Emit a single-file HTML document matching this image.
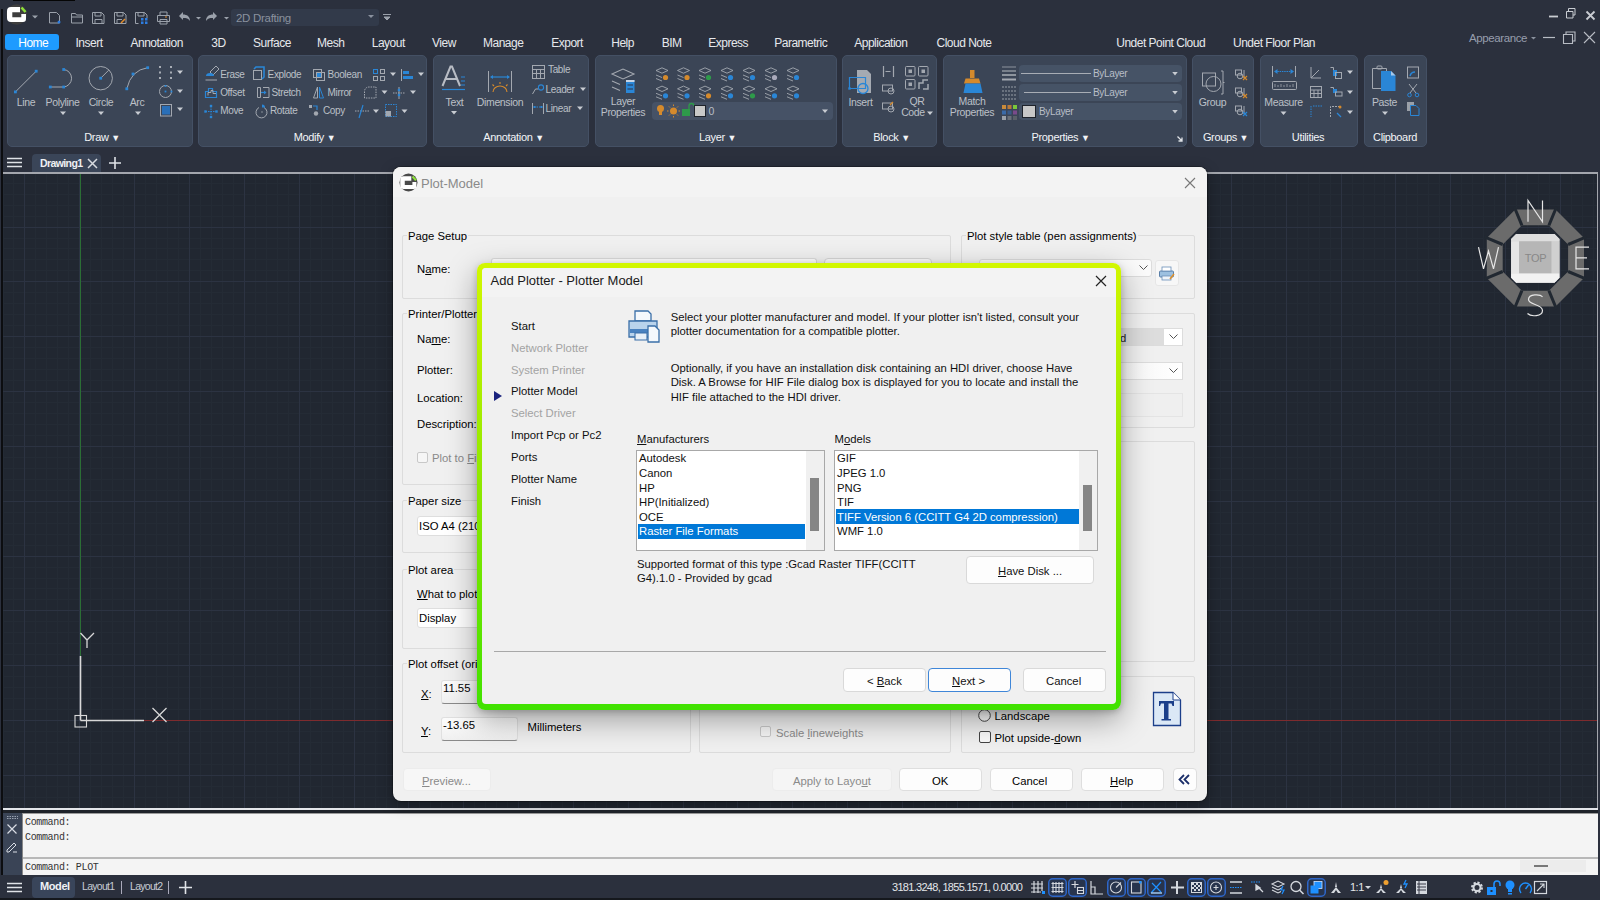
<!DOCTYPE html>
<html><head><meta charset="utf-8">
<style>
*{margin:0;padding:0;box-sizing:border-box}
html,body{width:1600px;height:900px;overflow:hidden;background:#2b303d;font-family:"Liberation Sans",sans-serif;position:relative}
.a{position:absolute}
.t{position:absolute;white-space:nowrap;line-height:1}
#top{left:0;top:0;width:1600px;height:152px;background:#2b303d}
.tab{position:absolute;top:36px;font-size:12px;color:#e6e8ec;white-space:nowrap;line-height:14px;letter-spacing:-0.5px}
.panel{position:absolute;top:55px;height:92px;background:#3b4556;border-radius:5px;border:1px solid #445064}
.plab{position:absolute;bottom:4px;left:0;right:0;text-align:center;font-size:11px;color:#e8eaee;line-height:12px}
#draw{left:3px;top:173px;width:1595px;height:635px;background-color:#212731;overflow:hidden}
#cmd{left:3px;top:808px;width:1595px;height:67px;background:#2a2e3a}
#status{left:0;top:875px;width:1600px;height:25px;background:#2b303d}
</style></head><body>
<div id="top" class="a"></div>
<div class="a" style="left:1px;top:9px;width:2px;height:882px;background:#0c0d10"></div>
<div class="a" style="left:13px;top:0;width:62px;height:1px;background:#050505"></div>

<!-- tabs -->
<div class="a" style="left:5px;top:34px;width:54px;height:16px;background:#1e9bff;border-radius:3px"></div>
<div class="tab" style="left:18.25px;color:#fff">Home</div>
<div class="tab" style="left:75.5px">Insert</div>
<div class="tab" style="left:130.5px">Annotation</div>
<div class="tab" style="left:211.25px">3D</div>
<div class="tab" style="left:253px">Surface</div>
<div class="tab" style="left:317px">Mesh</div>
<div class="tab" style="left:371.75px">Layout</div>
<div class="tab" style="left:432px">View</div>
<div class="tab" style="left:483px">Manage</div>
<div class="tab" style="left:551.25px">Export</div>
<div class="tab" style="left:611.25px">Help</div>
<div class="tab" style="left:661.75px">BIM</div>
<div class="tab" style="left:708.25px">Express</div>
<div class="tab" style="left:774.25px">Parametric</div>
<div class="tab" style="left:854.25px">Application</div>
<div class="tab" style="left:936.5px">Cloud Note</div>
<div class="tab" style="left:1116.25px">Undet Point Cloud</div>
<div class="tab" style="left:1233px">Undet Floor Plan</div>

<!-- panels -->
<div class="panel" style="left:7px;width:186px"></div>
<div class="panel" style="left:198px;width:229px"></div>
<div class="panel" style="left:433px;width:156px"></div>
<div class="panel" style="left:595px;width:242px"></div>
<div class="panel" style="left:842px;width:95px"></div>
<div class="panel" style="left:943px;width:244px"></div>
<div class="panel" style="left:1192px;width:62px"></div>
<div class="panel" style="left:1260px;width:98px"></div>
<div class="panel" style="left:1364px;width:63px"></div>

<!--RIB-->
<svg class="a" style="left:0;top:0" width="1440" height="150"><path d="M15.4 91.9L36.2 71.2" stroke="#a3a8b0" stroke-width="1"/><rect x="14.0" y="90.5" width="2.8" height="2.8" fill="#2a86d6"/><rect x="34.800000000000004" y="69.8" width="2.8" height="2.8" fill="#2a86d6"/><path d="M50.3 87H63.7M63.7 69.5A8.8 8.8 0 0 1 63.7 87" stroke="#a3a8b0" stroke-width="1" fill="none"/><rect x="48.9" y="85.6" width="2.8" height="2.8" fill="#2a86d6"/><rect x="62.300000000000004" y="85.6" width="2.8" height="2.8" fill="#2a86d6"/><rect x="62.300000000000004" y="68.1" width="2.8" height="2.8" fill="#2a86d6"/><circle cx="100.7" cy="78.2" r="11.7" stroke="#a3a8b0" stroke-width="1" fill="none"/><path d="M100.7 78.2L108.7 70.2" stroke="#a3a8b0"/><rect x="99.3" y="76.8" width="2.8" height="2.8" fill="#2a86d6"/><path d="M126.8 88.8Q131 70 147.7 67.7" stroke="#a3a8b0" stroke-width="1" fill="none"/><rect x="125.39999999999999" y="87.39999999999999" width="2.8" height="2.8" fill="#2a86d6"/><rect x="131.6" y="72.6" width="2.8" height="2.8" fill="#2a86d6"/><rect x="146.29999999999998" y="66.3" width="2.8" height="2.8" fill="#2a86d6"/><rect x="159" y="66" width="2" height="2" fill="#a8adb5"/><rect x="170" y="66" width="2" height="2" fill="#a8adb5"/><rect x="159" y="71.5" width="2" height="2" fill="#a8adb5"/><rect x="170" y="71.5" width="2" height="2" fill="#a8adb5"/><rect x="159" y="77" width="2" height="2" fill="#a8adb5"/><rect x="170" y="77" width="2" height="2" fill="#a8adb5"/><circle cx="165.5" cy="91.5" r="6" stroke="#a3a8b0" fill="none"/><rect x="164.6" y="85.1" width="1.8" height="1.8" fill="#2a86d6"/><rect x="164.6" y="90.6" width="1.8" height="1.8" fill="#2a86d6"/><rect x="170.6" y="90.6" width="1.8" height="1.8" fill="#2a86d6"/><rect x="160.5" y="104.5" width="11" height="11.5" stroke="#a3a8b0" fill="none"/><rect x="162" y="106" width="8" height="8.5" fill="#2a6fb8"/><path d="M60.0 111.5h6l-3.0 3.5z" fill="#c8ccd2"/><path d="M98.0 111.5h6l-3.0 3.5z" fill="#c8ccd2"/><path d="M135.0 111.5h6l-3.0 3.5z" fill="#c8ccd2"/><path d="M177.0 70.5h6l-3.0 3.5z" fill="#c8ccd2"/><path d="M177.0 89.5h6l-3.0 3.5z" fill="#c8ccd2"/><path d="M177.0 107.5h6l-3.0 3.5z" fill="#c8ccd2"/><path d="M210 72l6-6 3 3-6 6z" stroke="#a3a8b0" fill="none"/><path d="M206 76a4 3 0 0 1 8 0z" fill="#2a86d6"/><path d="M205.5 80h11.5" stroke="#a3a8b0"/><rect x="253.5" y="70.5" width="8" height="9" stroke="#a3a8b0" fill="none"/><path d="M254 69l2-2h8v10l-2 2" stroke="#2a86d6" stroke-width="1.6" fill="none"/><rect x="313.5" y="69.5" width="8" height="8" stroke="#a3a8b0" fill="none"/><rect x="316.5" y="72.5" width="8" height="8" stroke="#a3a8b0" fill="none"/><rect x="317" y="73" width="4" height="4" fill="#2a86d6"/><rect x="373.5" y="69.5" width="4" height="4" stroke="#2a86d6" fill="none"/><rect x="380.5" y="69.5" width="4" height="4" stroke="#a3a8b0" fill="none"/><rect x="373.5" y="76.5" width="4" height="4" stroke="#a3a8b0" fill="none"/><rect x="380.5" y="76.5" width="4" height="4" stroke="#a3a8b0" fill="none"/><path d="M390.0 72.5h6l-3.0 3.5z" fill="#c8ccd2"/><path d="M401.5 69v12" stroke="#a3a8b0"/><rect x="403" y="71" width="6" height="3" fill="#2a86d6"/><rect x="403" y="76" width="10" height="3" fill="#2a86d6"/><path d="M418.0 72.5h6l-3.0 3.5z" fill="#c8ccd2"/><path d="M205.5 97.5v-6h3v-3h4v3h4v6z" stroke="#2a86d6" fill="none" stroke-width="1.2"/><path d="M208 95.5v-3h3v-2h2v3h3" stroke="#a3a8b0" fill="none"/><path d="M257.5 87.5h3v10h-3zM263 87.5h6v10h-6" stroke="#a3a8b0" fill="none"/><path d="M261 92.5h5" stroke="#2a86d6" stroke-width="1.2"/><path d="M264 90.5l2.5 2-2.5 2z" fill="#2a86d6"/><path d="M313.5 98l4-11v11z" stroke="#a3a8b0" fill="none"/><path d="M319.5 87v11h4z" stroke="#2a86d6" fill="none"/><path d="M364.5 98v-6q0-5 5-5h6.5v11z" stroke="#a3a8b0" fill="none" stroke-dasharray="1.5 1"/><path d="M381.5 90.5h6l-3.0 3.5z" fill="#c8ccd2"/><path d="M393 93h12" stroke="#a3a8b0" stroke-dasharray="1.5 1"/><path d="M399 87v12" stroke="#a3a8b0"/><rect x="397.8" y="88.8" width="2.4" height="2.4" fill="#2a86d6"/><rect x="397.8" y="93.8" width="2.4" height="2.4" fill="#2a86d6"/><path d="M410.0 90.5h6l-3.0 3.5z" fill="#c8ccd2"/><path d="M211 106v11M205.5 111.5h11" stroke="#2a86d6" stroke-dasharray="1.5 1"/><rect x="209.8" y="104.8" width="2.4" height="2.4" fill="#2a86d6"/><rect x="209.8" y="115.8" width="2.4" height="2.4" fill="#2a86d6"/><rect x="204.3" y="110.3" width="2.4" height="2.4" fill="#2a86d6"/><rect x="215.3" y="110.3" width="2.4" height="2.4" fill="#2a86d6"/><path d="M259 107.5a5.5 5.5 0 1 0 5 0" stroke="#a3a8b0" fill="none"/><path d="M262 104.5a3 3 0 0 1 3 3h-3z" fill="#2a86d6"/><rect x="261.4" y="111.4" width="1.2" height="1.2" fill="#a3a8b0"/><rect x="309" y="105" width="3" height="3" fill="#a3a8b0"/><path d="M313 106h4v4" stroke="#2a86d6" fill="none" stroke-width="1.2"/><circle cx="316" cy="113.5" r="2.2" fill="#a3a8b0"/><path d="M355 111h14" stroke="#a3a8b0" stroke-dasharray="1.5 1"/><path d="M359 118l4-13" stroke="#2a86d6" stroke-width="1.2"/><path d="M373.0 109.5h6l-3.0 3.5z" fill="#c8ccd2"/><rect x="385.5" y="104.5" width="11" height="12" stroke="#2a86d6" fill="none" stroke-dasharray="1.5 1"/><rect x="385.5" y="111" width="5.5" height="5.5" fill="#a3a8b0"/><path d="M401.5 109.5h6l-3.0 3.5z" fill="#c8ccd2"/><path d="M442.5 86L450.5 66.5h1.5L460 86M445.5 79h12" stroke="#b8bcc4" stroke-width="2" fill="none"/><path d="M442 89.5h23" stroke="#2a86d6" stroke-width="1.2"/><path d="M461 77h4M461 81h4M461 85h4" stroke="#2a86d6"/><path d="M488.5 71v21M511.5 71v21" stroke="#a3a8b0"/><path d="M491 77h18" stroke="#2a86d6" stroke-width="1.2"/><path d="M490 77l3-2v4zM510 77l-3-2v4z" fill="#2a86d6"/><path d="M493 92a7 6 0 0 1 14 0M500 84v-2M494 86l-1.5-1.5M506 86l1.5-1.5" stroke="#d58a2c" stroke-width="1.1" fill="none"/><path d="M451.0 111.0h6l-3.0 3.5z" fill="#c8ccd2"/><rect x="532.5" y="65.5" width="12" height="13" stroke="#a3a8b0" fill="none"/><path d="M532.5 69.5h12M532.5 73.5h12M536.5 69.5v9M540.5 69.5v9" stroke="#a3a8b0"/><path d="M532.5 94l3-5h3" stroke="#a3a8b0" fill="none"/><circle cx="541" cy="87.5" r="2.6" stroke="#2a86d6" fill="none" stroke-width="1.1"/><path d="M580.0 87.5h6l-3.0 3.5z" fill="#c8ccd2"/><path d="M532.5 103v11M543.5 103v11" stroke="#a3a8b0"/><path d="M534 107h8" stroke="#2a86d6" stroke-dasharray="1.5 1"/><rect x="533.5" y="106" width="2" height="2" fill="#2a86d6"/><rect x="540.5" y="106" width="2" height="2" fill="#2a86d6"/><path d="M577.0 106.5h6l-3.0 3.5z" fill="#c8ccd2"/><path d="M612 74l11-5 11 5-11 5z" stroke="#a3a8b0" fill="none" stroke-width="1.1"/><path d="M612 81l8 3.5M612 87l8 3.5" stroke="#a3a8b0" stroke-width="1.1"/><rect x="626" y="80" width="8.5" height="13" fill="#2a86d6"/><path d="M627.5 85h5.5M627.5 89h5.5" stroke="#2a3348" stroke-width="1.2"/><rect x="626" y="80" width="8.5" height="2" fill="#c8d4e4"/><path d="M656 70.5L662 67.8L668 70.5L662 73.2Z" stroke="#a3a8b0" fill="none" stroke-width="0.9"/><path d="M656 75.0l6 2.5M656 78.5l6 2.5" stroke="#a3a8b0" stroke-width="0.9"/><circle cx="665.5" cy="77.5" r="2.6" fill="#d58a2c"/><path d="M677.5 70.5L683.5 67.8L689.5 70.5L683.5 73.2Z" stroke="#a3a8b0" fill="none" stroke-width="0.9"/><path d="M677.5 75.0l6 2.5M677.5 78.5l6 2.5" stroke="#a3a8b0" stroke-width="0.9"/><circle cx="687.0" cy="77.5" r="2.6" fill="#d58a2c"/><path d="M699 70.5L705 67.8L711 70.5L705 73.2Z" stroke="#a3a8b0" fill="none" stroke-width="0.9"/><path d="M699 75.0l6 2.5M699 78.5l6 2.5" stroke="#a3a8b0" stroke-width="0.9"/><circle cx="708.5" cy="77.5" r="2.6" fill="#2e9a4a"/><path d="M721 70.5L727 67.8L733 70.5L727 73.2Z" stroke="#a3a8b0" fill="none" stroke-width="0.9"/><path d="M721 75.0l6 2.5M721 78.5l6 2.5" stroke="#a3a8b0" stroke-width="0.9"/><circle cx="730.5" cy="77.5" r="2.6" fill="#2a86d6"/><path d="M743 70.5L749 67.8L755 70.5L749 73.2Z" stroke="#a3a8b0" fill="none" stroke-width="0.9"/><path d="M743 75.0l6 2.5M743 78.5l6 2.5" stroke="#a3a8b0" stroke-width="0.9"/><circle cx="752.5" cy="77.5" r="2.6" fill="#2a86d6"/><path d="M765 70.5L771 67.8L777 70.5L771 73.2Z" stroke="#a3a8b0" fill="none" stroke-width="0.9"/><path d="M765 75.0l6 2.5M765 78.5l6 2.5" stroke="#a3a8b0" stroke-width="0.9"/><circle cx="774.5" cy="77.5" r="2.6" fill="#aab"/><path d="M787 70.5L793 67.8L799 70.5L793 73.2Z" stroke="#a3a8b0" fill="none" stroke-width="0.9"/><path d="M787 75.0l6 2.5M787 78.5l6 2.5" stroke="#a3a8b0" stroke-width="0.9"/><circle cx="796.5" cy="77.5" r="2.6" fill="#2a86d6"/><path d="M656 88.8L662 86.1L668 88.8L662 91.5Z" stroke="#a3a8b0" fill="none" stroke-width="0.9"/><path d="M656 93.3l6 2.5M656 96.8l6 2.5" stroke="#a3a8b0" stroke-width="0.9"/><circle cx="665.5" cy="95.8" r="2.6" fill="#2a86d6"/><path d="M677.5 88.8L683.5 86.1L689.5 88.8L683.5 91.5Z" stroke="#a3a8b0" fill="none" stroke-width="0.9"/><path d="M677.5 93.3l6 2.5M677.5 96.8l6 2.5" stroke="#a3a8b0" stroke-width="0.9"/><circle cx="687.0" cy="95.8" r="2.6" fill="#2a86d6"/><path d="M699 88.8L705 86.1L711 88.8L705 91.5Z" stroke="#a3a8b0" fill="none" stroke-width="0.9"/><path d="M699 93.3l6 2.5M699 96.8l6 2.5" stroke="#a3a8b0" stroke-width="0.9"/><circle cx="708.5" cy="95.8" r="2.6" fill="#d58a2c"/><path d="M721 88.8L727 86.1L733 88.8L727 91.5Z" stroke="#a3a8b0" fill="none" stroke-width="0.9"/><path d="M721 93.3l6 2.5M721 96.8l6 2.5" stroke="#a3a8b0" stroke-width="0.9"/><circle cx="730.5" cy="95.8" r="2.6" fill="#2a86d6"/><path d="M743 88.8L749 86.1L755 88.8L749 91.5Z" stroke="#a3a8b0" fill="none" stroke-width="0.9"/><path d="M743 93.3l6 2.5M743 96.8l6 2.5" stroke="#a3a8b0" stroke-width="0.9"/><circle cx="752.5" cy="95.8" r="2.6" fill="#2e9a4a"/><path d="M765 88.8L771 86.1L777 88.8L771 91.5Z" stroke="#a3a8b0" fill="none" stroke-width="0.9"/><path d="M765 93.3l6 2.5M765 96.8l6 2.5" stroke="#a3a8b0" stroke-width="0.9"/><circle cx="774.5" cy="95.8" r="2.6" fill="#2a86d6"/><path d="M787 88.8L793 86.1L799 88.8L793 91.5Z" stroke="#a3a8b0" fill="none" stroke-width="0.9"/><path d="M787 93.3l6 2.5M787 96.8l6 2.5" stroke="#a3a8b0" stroke-width="0.9"/><circle cx="796.5" cy="95.8" r="2.6" fill="#2a86d6"/><rect x="652" y="102" width="181" height="18" rx="4" fill="#465266"/><circle cx="660.5" cy="108.5" r="3.5" fill="#d58a2c"/><rect x="659" y="111" width="3" height="4" fill="#d58a2c"/><circle cx="673.5" cy="111" r="3.5" fill="#d58a2c"/><path d="M673.5 104.5v1.5M673.5 116v1.5M667 111h1.5M678.5 111h1.5M669 106.5l1 1M677 114.5l1 1M678 106.5l-1 1M669 115.5l1-1" stroke="#d58a2c"/><rect x="682" y="109" width="8" height="7" fill="#2e9a4a"/><path d="M689 109v-3a2.5 2.5 0 0 1 5 0" stroke="#2e9a4a" stroke-width="1.3" fill="none"/><rect x="694.5" y="105.5" width="11" height="11" fill="#c8c8c8" stroke="#1f232b" stroke-width="1"/><path d="M822.0 109.5h6l-3.0 3.5z" fill="#c8ccd2"/><path d="M857 70h10l4 4v19h-14z" fill="#a5aab2"/><path d="M849.5 88.5v-11h16v11z" stroke="#2a86d6" stroke-width="1.2" fill="none"/><circle cx="863" cy="88.5" r="5" stroke="#2a86d6" stroke-width="1.3" fill="none"/><rect x="848.3" y="87.3" width="2.4" height="2.4" fill="#2a86d6"/><path d="M883.5 66v11M893.5 66v11" stroke="#a3a8b0" stroke-width="1.2"/><path d="M885.5 71.5h5" stroke="#a3a8b0"/><rect x="882.5" y="85" width="10" height="6" stroke="#a3a8b0" fill="none"/><circle cx="891" cy="91" r="3" stroke="#a3a8b0" fill="none"/><rect x="882.5" y="103" width="10" height="6" stroke="#a3a8b0" fill="none"/><circle cx="891" cy="109" r="3" stroke="#a3a8b0" fill="none"/><path d="M890 105l3-3" stroke="#d58a2c" stroke-width="1.3"/><rect x="905.5" y="66.5" width="9.5" height="9.5" rx="1" stroke="#a3a8b0" fill="none"/><rect x="908.5" y="69.5" width="3.5" height="3.5" fill="#a3a8b0"/><rect x="918.5" y="66.5" width="9.5" height="9.5" rx="1" stroke="#a3a8b0" fill="none"/><rect x="921.5" y="69.5" width="3.5" height="3.5" fill="#a3a8b0"/><rect x="905.5" y="79.5" width="9.5" height="9.5" rx="1" stroke="#a3a8b0" fill="none"/><rect x="908.5" y="82.5" width="3.5" height="3.5" fill="#a3a8b0"/><path d="M919 89v-6h4v-3h5M923 89h5v-5" stroke="#a3a8b0" stroke-width="1.5" fill="none"/><path d="M927.0 111.5h6l-3.0 3.5z" fill="#c8ccd2"/><rect x="970" y="70" width="4.5" height="8" fill="#d58a2c"/><path d="M965.5 78.5h13.5l1.5 5h-16.5z" fill="#d58a2c"/><path d="M963.5 93l2-9.5h15l2 9.5z" fill="#2a86d6"/><path d="M1002 67h14" stroke="#a3a8b0" stroke-width="0.8"/><path d="M1002 71h14" stroke="#a3a8b0" stroke-width="1.2"/><path d="M1002 75h14" stroke="#a3a8b0" stroke-width="1.6"/><path d="M1002 79.5h14" stroke="#a3a8b0" stroke-width="2"/><path d="M1002 87h14M1002 91h14M1002 95h14M1002 99h14" stroke="#a3a8b0" stroke-width="0.9" stroke-dasharray="2 1"/><rect x="1002.0" y="105.0" width="4" height="4" fill="#c98a3a"/><rect x="1007.5" y="105.0" width="4" height="4" fill="#b97a3a"/><rect x="1013.0" y="105.0" width="4" height="4" fill="#7ac83a"/><rect x="1002.0" y="110.5" width="4" height="4" fill="#3a6aa8"/><rect x="1007.5" y="110.5" width="4" height="4" fill="#3a5a88"/><rect x="1013.0" y="110.5" width="4" height="4" fill="#7a4a8a"/><rect x="1002.0" y="116.0" width="4" height="4" fill="#9aa0a8"/><rect x="1007.5" y="116.0" width="4" height="4" fill="#6a7078"/><rect x="1013.0" y="116.0" width="4" height="4" fill="#5a6068"/><rect x="1019" y="65" width="163" height="17" rx="4" fill="#465366"/><path d="M1172.25 72.0h5.5l-2.75 3.5z" fill="#c8ccd2"/><rect x="1019" y="84" width="163" height="17" rx="4" fill="#465366"/><path d="M1172.25 91.0h5.5l-2.75 3.5z" fill="#c8ccd2"/><rect x="1019" y="103" width="163" height="17" rx="4" fill="#465366"/><path d="M1172.25 110.0h5.5l-2.75 3.5z" fill="#c8ccd2"/><path d="M1021 73.5h70" stroke="#a8adb5" stroke-width="1"/><path d="M1024 92.5h67" stroke="#a8adb5" stroke-width="1.2"/><rect x="1022.5" y="105.5" width="13" height="12" fill="#c8c8c8" stroke="#1f232b"/><path d="M1177.5 136.5l4.5 4.5M1182 137.5v3.5h-3.5" stroke="#e0e3e8" stroke-width="1.3" fill="none"/><rect x="1202.5" y="73" width="13" height="13" stroke="#a3a8b0" fill="none"/><circle cx="1213.5" cy="84" r="7.5" stroke="#a3a8b0" fill="none"/><path d="M1221 71h2v23h-2M1223 82.5h1.5" stroke="#a3a8b0" fill="none"/><rect x="1235.5" y="70" width="6" height="5" stroke="#a3a8b0" fill="none"/><circle cx="1240" cy="76" r="2.8" stroke="#a3a8b0" fill="none"/><path d="M1244 70v8" stroke="#a3a8b0"/><path d="M1243 76l4 4M1247 76l-4 4" stroke="#d58a2c" stroke-width="1.2"/><rect x="1235.5" y="88" width="6" height="5" stroke="#a3a8b0" fill="none"/><circle cx="1240" cy="94" r="2.8" stroke="#a3a8b0" fill="none"/><path d="M1244 88v8" stroke="#a3a8b0"/><path d="M1243 94l4 4M1247 94l-4 4" stroke="#d58a2c" stroke-width="1.2"/><rect x="1235.5" y="106" width="6" height="5" stroke="#a3a8b0" fill="none"/><circle cx="1240" cy="112" r="2.8" stroke="#a3a8b0" fill="none"/><path d="M1244 106v8" stroke="#a3a8b0"/><path d="M1243 112l4 4M1247 112l-4 4" stroke="#2a86d6" stroke-width="1.2"/><path d="M1272.5 66v11M1295.5 66v11" stroke="#a3a8b0"/><path d="M1275 71.5h18" stroke="#2a86d6" stroke-dasharray="1.5 0.8"/><path d="M1274 71.5l3.5-2.5v5zM1294 71.5l-3.5-2.5v5z" fill="#2a86d6"/><rect x="1272.5" y="81.5" width="24" height="8" rx="1" stroke="#a3a8b0" fill="none"/><path d="M1275 84v3M1278 85v2M1281 84v3M1284 85v2M1287 84v3M1290 85v2M1293 84v3" stroke="#a3a8b0" stroke-width="0.8"/><path d="M1280.5 111.5h6l-3.0 3.5z" fill="#c8ccd2"/><path d="M1311 67v11h10M1311 78l8-8" stroke="#a3a8b0" fill="none"/><rect x="1310.5" y="86.5" width="11" height="11" stroke="#a3a8b0" fill="none"/><path d="M1310.5 90h11M1310.5 93.5h11M1314 90v7.5M1318 90v7.5" stroke="#a3a8b0"/><path d="M1311 106v11M1313 106h9" stroke="#2a86d6" stroke-dasharray="1.5 1"/><path d="M1330.5 67.5h3v8" stroke="#a3a8b0" fill="none"/><rect x="1333" y="70" width="4" height="6" fill="#2a86d6"/><rect x="1335.5" y="72.5" width="6" height="6" stroke="#a3a8b0" fill="none"/><path d="M1347.0 70.5h6l-3.0 3.5z" fill="#c8ccd2"/><path d="M1330.5 87.5h3v5" stroke="#a3a8b0" fill="none"/><rect x="1333" y="89" width="4" height="4" fill="#2a86d6"/><rect x="1335.5" y="92" width="6.5" height="4" stroke="#a3a8b0" fill="none"/><path d="M1347.0 90.5h6l-3.0 3.5z" fill="#c8ccd2"/><path d="M1330.5 117v-10.5h9" stroke="#a3a8b0" fill="none" stroke-dasharray="2 1"/><path d="M1337 113l4 4" stroke="#2a86d6" stroke-width="1.3"/><circle cx="1340" cy="107" r="1.5" fill="#d58a2c"/><path d="M1347.0 110.5h6l-3.0 3.5z" fill="#c8ccd2"/><path d="M1372.5 68.5h14v20h-14z" stroke="#a3a8b0" fill="none"/><rect x="1377" y="66" width="5" height="3" rx="1" stroke="#a3a8b0" fill="none"/><path d="M1381 71h10l4.5 4.5V91H1381z" fill="#2a86d6"/><path d="M1391 71v4.5h4.5" fill="#a8c8e8"/><path d="M1382.0 111.5h6l-3.0 3.5z" fill="#c8ccd2"/><rect x="1407.5" y="67" width="11" height="11" stroke="#a3a8b0" fill="none"/><path d="M1410 76q1-4 5-4" stroke="#2a86d6" stroke-width="1.5" fill="none"/><path d="M1409 84l7 9M1417 84l-7 9" stroke="#a3a8b0"/><circle cx="1409.5" cy="95" r="1.8" stroke="#2a86d6" fill="none"/><circle cx="1417" cy="95" r="1.8" stroke="#2a86d6" fill="none"/><rect x="1407" y="102" width="7" height="9" fill="#9aa0a8"/><path d="M1410.5 105.5h5.5l3 3v7h-8.5z" stroke="#2a86d6" fill="#3a4353"/></svg>
<div class="t" style="left:-34px;width:120px;text-align:center;top:95.86px;font-size:10.5px;line-height:13px;color:#bcc0c7;letter-spacing:-0.35px;">Line</div>
<div class="t" style="left:2.5px;width:120px;text-align:center;top:95.86px;font-size:10.5px;line-height:13px;color:#bcc0c7;letter-spacing:-0.35px;">Polyline</div>
<div class="t" style="left:41px;width:120px;text-align:center;top:95.86px;font-size:10.5px;line-height:13px;color:#bcc0c7;letter-spacing:-0.35px;">Circle</div>
<div class="t" style="left:77px;width:120px;text-align:center;top:95.86px;font-size:10.5px;line-height:13px;color:#bcc0c7;letter-spacing:-0.35px;">Arc</div>
<div class="t" style="left:42px;width:120px;text-align:center;top:131.19px;font-size:11px;line-height:13px;color:#f2f4f7;letter-spacing:-0.35px;">Draw <span style="font-size:9px">&#9660;</span></div>
<div class="t" style="left:220.2px;top:68.53px;font-size:10px;line-height:12px;color:#bcc0c7;letter-spacing:-0.35px;">Erase</div>
<div class="t" style="left:267.6px;top:68.53px;font-size:10px;line-height:12px;color:#bcc0c7;letter-spacing:-0.35px;">Explode</div>
<div class="t" style="left:327.6px;top:68.53px;font-size:10px;line-height:12px;color:#bcc0c7;letter-spacing:-0.35px;">Boolean</div>
<div class="t" style="left:220.2px;top:87.03px;font-size:10px;line-height:12px;color:#bcc0c7;letter-spacing:-0.35px;">Offset</div>
<div class="t" style="left:271.5px;top:87.03px;font-size:10px;line-height:12px;color:#bcc0c7;letter-spacing:-0.35px;">Stretch</div>
<div class="t" style="left:327.6px;top:87.03px;font-size:10px;line-height:12px;color:#bcc0c7;letter-spacing:-0.35px;">Mirror</div>
<div class="t" style="left:220.2px;top:105.33px;font-size:10px;line-height:12px;color:#bcc0c7;letter-spacing:-0.35px;">Move</div>
<div class="t" style="left:270px;top:105.33px;font-size:10px;line-height:12px;color:#bcc0c7;letter-spacing:-0.35px;">Rotate</div>
<div class="t" style="left:323px;top:105.33px;font-size:10px;line-height:12px;color:#bcc0c7;letter-spacing:-0.35px;">Copy</div>
<div class="t" style="left:254.5px;width:120px;text-align:center;top:131.19px;font-size:11px;line-height:13px;color:#f2f4f7;letter-spacing:-0.35px;">Modify <span style="font-size:9px">&#9660;</span></div>
<div class="t" style="left:394.5px;width:120px;text-align:center;top:96.36px;font-size:10.5px;line-height:13px;color:#bcc0c7;letter-spacing:-0.35px;">Text</div>
<div class="t" style="left:440px;width:120px;text-align:center;top:96.36px;font-size:10.5px;line-height:13px;color:#bcc0c7;letter-spacing:-0.35px;">Dimension</div>
<div class="t" style="left:548px;top:64.03px;font-size:10px;line-height:12px;color:#bcc0c7;letter-spacing:-0.35px;">Table</div>
<div class="t" style="left:545.5px;top:84.03px;font-size:10px;line-height:12px;color:#bcc0c7;letter-spacing:-0.35px;">Leader</div>
<div class="t" style="left:545.5px;top:102.53px;font-size:10px;line-height:12px;color:#bcc0c7;letter-spacing:-0.35px;">Linear</div>
<div class="t" style="left:453.5px;width:120px;text-align:center;top:131.19px;font-size:11px;line-height:13px;color:#f2f4f7;letter-spacing:-0.35px;">Annotation <span style="font-size:9px">&#9660;</span></div>
<div class="t" style="left:563px;width:120px;text-align:center;top:94.86px;font-size:10.5px;line-height:13px;color:#bcc0c7;letter-spacing:-0.35px;">Layer</div>
<div class="t" style="left:563px;width:120px;text-align:center;top:105.66px;font-size:10.5px;line-height:13px;color:#bcc0c7;letter-spacing:-0.35px;">Properties</div>
<div class="t" style="left:708.5px;top:105.36px;font-size:10.5px;line-height:13px;color:#b8bdc5;letter-spacing:-0.35px;">0</div>
<div class="t" style="left:657.5px;width:120px;text-align:center;top:131.19px;font-size:11px;line-height:13px;color:#f2f4f7;letter-spacing:-0.35px;">Layer <span style="font-size:9px">&#9660;</span></div>
<div class="t" style="left:800.5px;width:120px;text-align:center;top:95.86px;font-size:10.5px;line-height:13px;color:#bcc0c7;letter-spacing:-0.35px;">Insert</div>
<div class="t" style="left:857px;width:120px;text-align:center;top:95.36px;font-size:10.5px;line-height:13px;color:#bcc0c7;letter-spacing:-0.35px;">QR</div>
<div class="t" style="left:853px;width:120px;text-align:center;top:105.86px;font-size:10.5px;line-height:13px;color:#bcc0c7;letter-spacing:-0.35px;">Code</div>
<div class="t" style="left:831.5px;width:120px;text-align:center;top:131.19px;font-size:11px;line-height:13px;color:#f2f4f7;letter-spacing:-0.35px;">Block <span style="font-size:9px">&#9660;</span></div>
<div class="t" style="left:912px;width:120px;text-align:center;top:95.36px;font-size:10.5px;line-height:13px;color:#bcc0c7;letter-spacing:-0.35px;">Match</div>
<div class="t" style="left:912px;width:120px;text-align:center;top:105.86px;font-size:10.5px;line-height:13px;color:#bcc0c7;letter-spacing:-0.35px;">Properties</div>
<div class="t" style="left:1093px;top:68.03px;font-size:10px;line-height:12px;color:#b9bec6;letter-spacing:-0.35px;">ByLayer</div>
<div class="t" style="left:1093px;top:87.03px;font-size:10px;line-height:12px;color:#b9bec6;letter-spacing:-0.35px;">ByLayer</div>
<div class="t" style="left:1039px;top:106.03px;font-size:10px;line-height:12px;color:#b9bec6;letter-spacing:-0.35px;">ByLayer</div>
<div class="t" style="left:1000.5px;width:120px;text-align:center;top:131.19px;font-size:11px;line-height:13px;color:#f2f4f7;letter-spacing:-0.35px;">Properties <span style="font-size:9px">&#9660;</span></div>
<div class="t" style="left:1152.5px;width:120px;text-align:center;top:95.86px;font-size:10.5px;line-height:13px;color:#bcc0c7;letter-spacing:-0.35px;">Group</div>
<div class="t" style="left:1165.5px;width:120px;text-align:center;top:131.19px;font-size:11px;line-height:13px;color:#f2f4f7;letter-spacing:-0.35px;">Groups <span style="font-size:9px">&#9660;</span></div>
<div class="t" style="left:1223.5px;width:120px;text-align:center;top:95.86px;font-size:10.5px;line-height:13px;color:#bcc0c7;letter-spacing:-0.35px;">Measure</div>
<div class="t" style="left:1248px;width:120px;text-align:center;top:131.19px;font-size:11px;line-height:13px;color:#f2f4f7;letter-spacing:-0.35px;">Utilities</div>
<div class="t" style="left:1324.5px;width:120px;text-align:center;top:95.86px;font-size:10.5px;line-height:13px;color:#bcc0c7;letter-spacing:-0.35px;">Paste</div>
<div class="t" style="left:1335px;width:120px;text-align:center;top:131.19px;font-size:11px;line-height:13px;color:#f2f4f7;letter-spacing:-0.35px;">Clipboard</div>
<!--/RIB-->
<div id="draw" class="a"><svg class="a" style="left:0;top:0" width="1595" height="635"><path d="M0.5 0V635M10.5 0V635M32.5 0V635M43.5 0V635M54.5 0V635M65.5 0V635M87.5 0V635M98.5 0V635M109.5 0V635M120.5 0V635M142.5 0V635M153.5 0V635M164.5 0V635M175.5 0V635M197.5 0V635M208.5 0V635M219.5 0V635M230.5 0V635M252.5 0V635M263.5 0V635M274.5 0V635M285.5 0V635M307.5 0V635M318.5 0V635M329.5 0V635M340.5 0V635M361.5 0V635M372.5 0V635M383.5 0V635M394.5 0V635M416.5 0V635M427.5 0V635M438.5 0V635M449.5 0V635M471.5 0V635M482.5 0V635M493.5 0V635M504.5 0V635M526.5 0V635M537.5 0V635M548.5 0V635M559.5 0V635M581.5 0V635M592.5 0V635M603.5 0V635M614.5 0V635M636.5 0V635M647.5 0V635M658.5 0V635M669.5 0V635M691.5 0V635M701.5 0V635M712.5 0V635M723.5 0V635M745.5 0V635M756.5 0V635M767.5 0V635M778.5 0V635M800.5 0V635M811.5 0V635M822.5 0V635M833.5 0V635M855.5 0V635M866.5 0V635M877.5 0V635M888.5 0V635M910.5 0V635M921.5 0V635M932.5 0V635M943.5 0V635M965.5 0V635M976.5 0V635M987.5 0V635M998.5 0V635M1020.5 0V635M1031.5 0V635M1041.5 0V635M1052.5 0V635M1074.5 0V635M1085.5 0V635M1096.5 0V635M1107.5 0V635M1129.5 0V635M1140.5 0V635M1151.5 0V635M1162.5 0V635M1184.5 0V635M1195.5 0V635M1206.5 0V635M1217.5 0V635M1239.5 0V635M1250.5 0V635M1261.5 0V635M1272.5 0V635M1294.5 0V635M1305.5 0V635M1316.5 0V635M1327.5 0V635M1349.5 0V635M1360.5 0V635M1371.5 0V635M1381.5 0V635M1403.5 0V635M1414.5 0V635M1425.5 0V635M1436.5 0V635M1458.5 0V635M1469.5 0V635M1480.5 0V635M1491.5 0V635M1513.5 0V635M1524.5 0V635M1535.5 0V635M1546.5 0V635M1568.5 0V635M1579.5 0V635M1590.5 0V635M0 10.5H1595M0 21.5H1595M0 32.5H1595M0 43.5H1595M0 65.5H1595M0 75.5H1595M0 86.5H1595M0 97.5H1595M0 119.5H1595M0 130.5H1595M0 141.5H1595M0 152.5H1595M0 174.5H1595M0 185.5H1595M0 196.5H1595M0 207.5H1595M0 229.5H1595M0 240.5H1595M0 251.5H1595M0 262.5H1595M0 284.5H1595M0 295.5H1595M0 306.5H1595M0 317.5H1595M0 339.5H1595M0 350.5H1595M0 361.5H1595M0 372.5H1595M0 394.5H1595M0 405.5H1595M0 415.5H1595M0 426.5H1595M0 448.5H1595M0 459.5H1595M0 470.5H1595M0 481.5H1595M0 503.5H1595M0 514.5H1595M0 525.5H1595M0 536.5H1595M0 558.5H1595M0 569.5H1595M0 580.5H1595M0 591.5H1595M0 613.5H1595M0 624.5H1595" stroke="#242b35" stroke-width="1"/><path d="M21.5 0V635M76.5 0V635M131.5 0V635M186.5 0V635M241.5 0V635M296.5 0V635M351.5 0V635M405.5 0V635M460.5 0V635M515.5 0V635M570.5 0V635M625.5 0V635M680.5 0V635M734.5 0V635M789.5 0V635M844.5 0V635M899.5 0V635M954.5 0V635M1009.5 0V635M1063.5 0V635M1118.5 0V635M1173.5 0V635M1228.5 0V635M1283.5 0V635M1338.5 0V635M1392.5 0V635M1447.5 0V635M1502.5 0V635M1557.5 0V635M0 54.5H1595M0 108.5H1595M0 163.5H1595M0 218.5H1595M0 273.5H1595M0 328.5H1595M0 383.5H1595M0 437.5H1595M0 492.5H1595M0 547.5H1595M0 602.5H1595" stroke="#2c3342" stroke-width="1"/></svg>
<!-- axes -->
<div class="a" style="left:77px;top:0;width:1px;height:483px;background:#2b6e35"></div>
<div class="a" style="left:141px;top:547px;width:1454px;height:1px;background:#7e2b2e"></div>
<svg class="a" style="left:60px;top:450px" width="120" height="120">
<path d="M17.5 33V97.5M17.5 97.5H81" stroke="#d8d8d8" stroke-width="1.6" fill="none"/>
<rect x="12" y="92.5" width="11.5" height="11.5" stroke="#d8d8d8" stroke-width="1.1" fill="none"/>
<path d="M17.5 10L24 17L31 10M24 17V25" stroke="#d8d8d8" stroke-width="1.3" fill="none"/>
<path d="M89.5 85L103.5 99M103.5 85L89.5 99" stroke="#d8d8d8" stroke-width="1.3" fill="none"/>
</svg>
</div>
<div id="cmd" class="a">
<div class="a" style="left:0;top:0;width:1595px;height:2px;background:#e4e6ea"></div>
<div class="a" style="left:0;top:2px;width:1595px;height:3px;background:#1e2229"></div>
<div class="a" style="left:0;top:5px;width:19px;height:62px;background:#3a4456"></div>
<div class="a" style="left:19px;top:5px;width:1576px;height:62px;background:#f4f4f4;border-left:1px solid #888;border-top:1px solid #9a9a9a"></div>
<div class="a" style="left:20px;top:49px;width:1575px;height:2px;background:#b8b8b8"></div>
<div class="a" style="left:1517px;top:52px;width:66px;height:12px;background:#ececec"></div>
<div class="a" style="left:1531px;top:57px;width:14px;height:2px;background:#777"></div>
<div class="t" style="left:22px;top:8px;font:10px/13px 'Liberation Mono',monospace;color:#333;letter-spacing:-0.35px">Command:</div>
<div class="t" style="left:22px;top:23px;font:10px/13px 'Liberation Mono',monospace;color:#333;letter-spacing:-0.35px">Command:</div>
<div class="t" style="left:22px;top:53px;font:10px/13px 'Liberation Mono',monospace;color:#333;letter-spacing:-0.35px">Command: PLOT</div>
<svg class="a" style="left:0;top:5px" width="19" height="62">
<path d="M4 3.5h11M4 5.5h11" stroke="#9aa3b2" stroke-width="1" stroke-dasharray="1.5 1"/>
<path d="M4.5 11.5l9 9M13.5 11.5l-9 9" stroke="#d8dce4" stroke-width="1.2"/>
<path d="M4 37l7-7 2 2-7 7h-2z M10 39h4" stroke="#d8dce4" stroke-width="1" fill="none"/>
</svg>
</div>
<div id="status" class="a">
<div class="a" style="left:0;top:23px;width:1550px;height:2px;background:#15181d"></div>
<svg class="a" style="left:7px;top:7px" width="16" height="12"><path d="M0 1.5h15M0 5.5h15M0 9.5h15" stroke="#e0e3e8" stroke-width="1.6"/></svg>
<div class="a" style="left:32px;top:2px;width:43px;height:21px;background:#39455a;border-radius:4px"></div>
<div class="t" style="left:40px;top:6px;font-size:11px;font-weight:bold;color:#f0f2f5;letter-spacing:-0.4px">Model</div>
<div class="t" style="left:82px;top:6px;font-size:10.5px;color:#c8ccd4;letter-spacing:-0.7px">Layout1</div>
<div class="a" style="left:121px;top:6px;width:1px;height:13px;background:#aab"></div>
<div class="t" style="left:130px;top:6px;font-size:10.5px;color:#c8ccd4;letter-spacing:-0.7px">Layout2</div>
<div class="a" style="left:168px;top:6px;width:1px;height:13px;background:#aab"></div>
<svg class="a" style="left:179px;top:6px" width="13" height="13"><path d="M6.5 0v13M0 6.5h13" stroke="#e0e3e8" stroke-width="1.6"/></svg>
<div class="t" style="left:892px;top:7px;font-size:11px;color:#e4e6ea;letter-spacing:-0.7px">3181.3248, 1855.1571, 0.0000</div>
<svg class="a" style="left:0;top:0" width="1600" height="25">
<path d="M1034 6v12M1038 6v12M1042 6v10M1031 9h12M1031 13h12M1031 17h10" stroke="#d4d8de" stroke-width="1.2" fill="none"/><rect x="1042" y="16" width="3" height="3" fill="#1e90ff"/>
<rect x="1048.75" y="3.75" width="17.5" height="17.5" rx="4" fill="#27344d" stroke="#2e66c8" stroke-width="1.5"/>
<path d="M1053 7v11M1056 7v11M1059 7v11M1062 7v11M1051.5 8.5h12M1051.5 12.5h12M1051.5 16.5h12" stroke="#d4d8de" stroke-width="1.1" fill="none"/>
<rect x="1068.75" y="3.75" width="17.5" height="17.5" rx="4" fill="#27344d" stroke="#2e66c8" stroke-width="1.5"/>
<path d="M1075 6v7M1071.5 9.5h7" stroke="#d4d8de" stroke-width="1.2"/><rect x="1077.5" y="12.5" width="6" height="6" fill="none" stroke="#d4d8de" stroke-width="1.1"/><path d="M1078 15.5h5" stroke="#d4d8de"/>
<path d="M1091 6v13h12M1091 12h4v7" stroke="#d4d8de" stroke-width="1.2" fill="none"/>
<rect x="1107.75" y="3.75" width="17.5" height="17.5" rx="4" fill="#27344d" stroke="#2e66c8" stroke-width="1.5"/>
<circle cx="1116" cy="12.5" r="5.5" fill="none" stroke="#d4d8de" stroke-width="1.1"/><path d="M1116 12.5l5-5" stroke="#d4d8de" stroke-width="1.1"/>
<rect x="1127.75" y="3.75" width="17.5" height="17.5" rx="4" fill="#27344d" stroke="#2e66c8" stroke-width="1.5"/>
<rect x="1131.5" y="7" width="9.5" height="11" fill="none" stroke="#d4d8de" stroke-width="1.1"/><rect x="1139" y="6" width="2.5" height="2.5" fill="#1e90ff"/>
<rect x="1147.75" y="3.75" width="17.5" height="17.5" rx="4" fill="#27344d" stroke="#2e66c8" stroke-width="1.5"/>
<path d="M1151 18h11M1151 18l10-11M1152 8l9 9" stroke="#1e90ff" stroke-width="1.2" fill="none"/><path d="M1151 18h11" stroke="#d4d8de" stroke-width="1.1"/>
<path d="M1177 6v13M1171 12.5h13" stroke="#d4d8de" stroke-width="2"/>
<rect x="1187.75" y="3.75" width="17.5" height="17.5" rx="4" fill="#27344d" stroke="#2e66c8" stroke-width="1.5"/>
<rect x="1191.5" y="7.5" width="10" height="10" fill="none" stroke="#d4d8de" stroke-width="1"/><path d="M1192 8h2v2h-2zM1196 8h2v2h-2zM1194 10h2v2h-2zM1198 10h2v2h-2zM1192 12h2v2h-2zM1196 12h2v2h-2zM1194 14h2v2h-2zM1198 14h2v2h-2zM1200 8h1v2h-1zM1200 12h1v2h-1z" fill="#d4d8de"/>
<rect x="1207.75" y="3.75" width="17.5" height="17.5" rx="4" fill="#27344d" stroke="#2e66c8" stroke-width="1.5"/>
<circle cx="1216" cy="12.5" r="5.5" fill="none" stroke="#d4d8de" stroke-width="1.1"/><path d="M1213.5 12.5h5M1216 10v5" stroke="#d4d8de" stroke-width="1.1"/>
<path d="M1230 7h12M1230 18h12" stroke="#d4d8de" stroke-width="1.4"/><path d="M1230 12.5h12" stroke="#1e90ff" stroke-width="1" stroke-dasharray="1.5 1"/>
<path d="M1251 7h10" stroke="#1e90ff" stroke-width="1" stroke-dasharray="1.5 1"/><path d="M1256 10l7 7M1256 10v5l4-2z" stroke="#d4d8de" stroke-width="1.3" fill="#d4d8de"/>
<path d="M1272 9l6-3 6 3-6 3zM1272 12l6 3 4-2M1272 15l6 3 3-1.5" stroke="#d4d8de" stroke-width="1.1" fill="none"/><path d="M1283 11l-2 4h3l-2 4" stroke="#1e90ff" stroke-width="1.2" fill="none"/>
<circle cx="1296" cy="11.5" r="5" fill="none" stroke="#d4d8de" stroke-width="1.3"/><path d="M1299.5 15l4 4" stroke="#d4d8de" stroke-width="1.6"/>
<rect x="1307.75" y="3.75" width="17.5" height="17.5" rx="4" fill="#27344d" stroke="#2e66c8" stroke-width="1.5"/>
<rect x="1314" y="6.5" width="8" height="7" fill="#1e90ff" stroke="#cfe3ff" stroke-width="0.8"/><rect x="1310.5" y="10.5" width="8" height="8" fill="#1e90ff"/>
<path d="M1336 7l-1 5h2zM1336 12l-5 6h3l2-3zM1336 12l5 6h-3l-2-3z" fill="#d4d8de"/>
</svg>
<div class="t" style="left:1350px;top:7px;font-size:11px;color:#e4e6ea;letter-spacing:-0.5px">1:1</div>
<svg class="a" style="left:0;top:0" width="1600" height="25">
<path d="M1365 11h6l-3 3z" fill="#d4d8de"/>
<path d="M1381 9l-1 4h2zM1381 13l-5 5h3l2-3zM1381 13l5 5h-3l-2-3z" fill="#d4d8de"/><circle cx="1386" cy="7.5" r="2.5" fill="#f0a030"/>
<path d="M1401 9l-1 4h2zM1401 13l-5 5h3l2-3zM1401 13l5 5h-3l-2-3z" fill="#d4d8de"/><path d="M1406 5l-2 4h3l-2 4" stroke="#1e90ff" stroke-width="1.3" fill="none"/>
<rect x="1416" y="6" width="11" height="13" fill="#d4d8de"/><path d="M1417 9h9M1417 12h9M1417 15h9M1419 6v13" stroke="#2a2e3a" stroke-width="0.9"/>
<circle cx="1477" cy="12.5" r="4.5" fill="none" stroke="#d4d8de" stroke-width="3" stroke-dasharray="2 1.5"/><circle cx="1477" cy="12.5" r="3.5" fill="none" stroke="#d4d8de" stroke-width="2"/>
<rect x="1487" y="12" width="9" height="8" fill="#1e90ff"/><path d="M1494 12v-3a3 3 0 0 1 6 0v2" stroke="#1e90ff" stroke-width="1.6" fill="none"/><rect x="1490.5" y="15" width="2" height="2" fill="#2a2e3a"/>
<circle cx="1510" cy="10" r="4.5" fill="#1e90ff"/><rect x="1508" y="13" width="4" height="4" fill="#1e90ff"/><rect x="1508" y="18" width="4" height="1.5" fill="#1e90ff"/>
<path d="M1521 18a6 6 0 1 1 9 0" stroke="#1e90ff" stroke-width="1.4" fill="none"/><path d="M1525.5 14l3-4" stroke="#1e90ff" stroke-width="1.4"/>
<rect x="1534.5" y="6.5" width="12" height="12" fill="none" stroke="#d4d8de" stroke-width="1.2"/><path d="M1537 16l7-7M1540 9h4v4" stroke="#d4d8de" stroke-width="1.1" fill="none"/>
</svg>
</div>

<!--TOP-->
<svg class="a" style="left:0;top:0" width="32" height="30"><circle cx="16.7" cy="14.5" r="10.3" fill="#3e3e3e"/><path d="M11 7H20V12.3H12.3V17.3H21.3V14H26V19Q26 22 23 22H11Q7 22 7 18V11Q7 7 11 7Z" fill="#fff"/><path d="M21.5 7.5L25.5 12" stroke="#8de03a" stroke-width="2.6"/></svg>
<svg class="a" style="left:0;top:0" width="400" height="32"><path d="M32 15.5h6l-3 3z" fill="#9ba1ab"/><path d="M49.5 12.5h7l3 3v7.5h-10z" stroke="#9ba1ab" fill="none" stroke-width="1"/><circle cx="59" cy="22" r="1.5" fill="#2e7de0"/><path d="M71.5 13.5h4l1 1.5h6v8h-11zM71.5 17h11" stroke="#9ba1ab" fill="none" stroke-width="1"/><path d="M92.5 12.5h9l2.5 2.5v8.5h-11.5zM95 12.5v3.5h6v-3.5M95 23.5v-4h7v4" stroke="#9ba1ab" fill="none" stroke-width="1"/><path d="M114.5 12.5h9l2.5 2.5v8.5h-11.5zM117 12.5v3.5h6v-3.5M117 23.5v-4h5" stroke="#9ba1ab" fill="none" stroke-width="1"/><path d="M121 23l4-4" stroke="#e08a2a" stroke-width="1.6"/><path d="M135.5 12.5h9l2.5 2.5v3M135.5 12.5v11h3M138 12.5v3.5h6v-3.5" stroke="#9ba1ab" fill="none" stroke-width="1"/><path d="M141 18h2.5v2.5h-2.5zM145 18h2.5v2.5h-2.5zM141 21.5h2.5v2.5h-2.5zM145 21.5h2.5v2.5h-2.5z" fill="#2e7de0"/><path d="M157.5 15.5h12v6h-12zM160 15.5v-3.5h7v3.5M160 19.5h7v4.5h-7z" stroke="#9ba1ab" fill="none" stroke-width="1"/><path d="M165 17h2" stroke="#e08a2a"/><path d="M179 16l4-4v2.5c4 0 7 2 7 6.5c-1.5-2.5-3.5-3-7-3V20z" fill="#9ba1ab"/><path d="M196 17h5l-2.5 2.5z" fill="#9ba1ab"/><path d="M217 16l-4-4v2.5c-4 0-7 2-7 6.5c1.5-2.5 3.5-3 7-3V20z" fill="#9ba1ab"/><path d="M224 17h5l-2.5 2.5z" fill="#9ba1ab"/><path d="M369 17h5l-2.5 2.5z" fill="#9ba1ab"/><path d="M383 14.5h8M384 17h6l-3 3z" stroke="#9ba1ab" fill="#9ba1ab" stroke-width="1"/></svg>
<div class="a" style="left:231px;top:9px;width:148px;height:17px;background:#323a4a;border-radius:3px"></div>
<div class="t" style="left:236px;top:11.02px;font-size:11.5px;line-height:14px;color:#8a919e;letter-spacing:-0.3px">2D Drafting</div>
<svg class="a" style="left:366px;top:14px" width="10" height="6"><path d="M2 1h6l-3 3z" fill="#8a919e"/></svg>
<svg class="a" style="left:1460px;top:0" width="140" height="50"><path d="M89 16.5h9" stroke="#c9ccd2" stroke-width="1.8"/><path d="M106.5 11.5h6.5v6.5h-6.5zM108.5 11.5v-3h6.5v6.5h-2" stroke="#c9ccd2" stroke-width="1" fill="none"/><path d="M126.5 11.5l8 8M134.5 11.5l-8 8" stroke="#c9ccd2" stroke-width="1.8"/><path d="M71 37h5l-2.5 2.5z" fill="#8a919e"/><path d="M83 37.5h12" stroke="#b8bcc4" stroke-width="1.2"/><path d="M103.5 34.5h9v9h-9zM106 34.5v-2.5h9v9h-2.5" stroke="#b8bcc4" stroke-width="1.1" fill="none"/><path d="M124 32l11 11M135 32l-11 11" stroke="#b8bcc4" stroke-width="1.1"/></svg>
<div class="t" style="left:1469px;top:30.52px;font-size:11.5px;line-height:14px;color:#979ead;letter-spacing:-0.4px">Appearance</div>
<svg class="a" style="left:7px;top:157px" width="16" height="12"><path d="M0 1.5h15M0 5.5h15M0 9.5h15" stroke="#dfe2e7" stroke-width="1.5"/></svg>
<div class="a" style="left:32px;top:154px;width:69px;height:19px;background:#3a4558;border-radius:4px 4px 0 0"></div>
<div class="t" style="left:40px;top:156.86px;font-size:10.5px;line-height:13px;color:#eef0f3;font-weight:bold;letter-spacing:-0.6px">Drawing1</div>
<svg class="a" style="left:87px;top:158px" width="11" height="11"><path d="M1 1l9 9M10 1L1 10" stroke="#d8dbe0" stroke-width="1.5"/></svg>
<svg class="a" style="left:108px;top:156px" width="14" height="14"><path d="M7 1v12M1 7h12" stroke="#dfe2e7" stroke-width="1.6"/></svg>
<div class="a" style="left:3px;top:172px;width:1595px;height:1.5px;background:#a3a6ad"></div>
<div class="a" style="left:1597px;top:173px;width:1px;height:635px;background:#a3a6ad"></div>
<svg class="a" style="left:1470px;top:195px" width="130" height="130">
<path d="M114.0 83.1L85.5 111.6L45.3 111.6L16.8 83.1L16.8 42.9L45.3 14.4L85.5 14.4L114.0 42.9ZM98.1 76.5L78.9 95.7L51.9 95.7L32.7 76.5L32.7 49.5L51.9 30.3L78.9 30.3L98.1 49.5Z" fill="#6b6b6b" fill-rule="evenodd"/>
<path d="M98.1 76.5L116.4 84.1M78.9 95.7L86.5 114.0M51.9 95.7L44.3 114.0M32.7 76.5L14.4 84.1M32.7 49.5L14.4 41.9M51.9 30.3L44.3 12.0M78.9 30.3L86.5 12.0M98.1 49.5L116.4 41.9" stroke="#212831" stroke-width="3"/>
<path d="M46.1 38.9H84.5L89.5 43.9V82.8L84.5 87.8H46.1L41.1 82.8V43.9Z" fill="#d4d4d4"/>
<path d="M46.1 38.9H84.5L89.5 43.9V46.3H41.1V43.9Z" fill="#dedede"/>
<path d="M41.1 78.3H89.5V82.8L84.5 87.8H46.1L41.1 82.8Z" fill="#f2f2f2"/>
<rect x="41.1" y="46.3" width="8" height="32" fill="#e6e6e6"/>
<rect x="81.5" y="46.3" width="8" height="32" fill="#d0d0d0"/>
<rect x="49.1" y="46.3" width="32.4" height="32" fill="#b6b6b6"/>
<text x="65.5" y="67" font-family="Liberation Sans" font-size="11" fill="#888" text-anchor="middle" letter-spacing="-0.3">TOP</text>
<g fill="none" stroke="#e6e6e6" stroke-width="1.2">
<path d="M58 26.8V5.4L72.5 26.8V5.4"/>
<path d="M8.5 52.2L13.5 73.9L18.5 56L23.5 73.9L28.5 52.2"/>
<path d="M119 52.2H106V73.9H119M106 62.8H117"/>
<path d="M72.5 102C70.5 99 58.5 98.5 58.5 104.5C58.5 110 72.5 109 72.5 115.5C72.5 121.5 61 122 57.5 118.5"/>
</g>
</svg>
<!--/TOP-->
<!--DLG-->
<div class="a" style="left:393px;top:167px;width:814px;height:634px;background:#f0f0f0;border-radius:8px;box-shadow:0 0 0 1px rgba(0,0,0,0.25),0 4px 14px rgba(0,0,0,0.35)"></div>
<div class="a" style="left:393px;top:167px;width:814px;height:30px;background:#f3f3f3;border-radius:8px 8px 0 0"></div>
<svg class="a" style="left:399px;top:173px" width="20" height="20"><g transform="translate(9.5 9.5) scale(0.85) translate(-16.7 -14.5)"><circle cx="16.7" cy="14.5" r="10.6" fill="#4a4a4a"/><path d="M11 7H20V12.3H12.3V17.3H21.3V14H26V19Q26 22 23 22H11Q7 22 7 18V11Q7 7 11 7Z" fill="#fff"/><path d="M21.5 7.5L25.5 12" stroke="#8de03a" stroke-width="2.6"/></g></svg>
<div class="t" style="left:421px;top:176.00px;font-size:13px;line-height:16px;color:#8a8a8a;">Plot-Model</div>
<svg class="a" style="left:1184px;top:177px" width="12" height="12"><path d="M1 1l10 10M11 1L1 11" stroke="#777" stroke-width="1.1"/></svg>
<div class="a" style="left:402px;top:235px;width:549px;height:64px;border:1px solid #dcdcdc;border-radius:2px"></div><div class="t" style="left:407px;top:228.58px;font-size:11.3px;line-height:14px;color:#000;background:#f0f0f0;padding:0 1px">Page Setup</div>
<div class="a" style="left:402px;top:313px;width:549px;height:172px;border:1px solid #dcdcdc;border-radius:2px"></div><div class="t" style="left:407px;top:306.58px;font-size:11.3px;line-height:14px;color:#000;background:#f0f0f0;padding:0 1px">Printer/Plotter</div>
<div class="a" style="left:402px;top:500px;width:289px;height:53px;border:1px solid #dcdcdc;border-radius:2px"></div><div class="t" style="left:407px;top:493.58px;font-size:11.3px;line-height:14px;color:#000;background:#f0f0f0;padding:0 1px">Paper size</div>
<div class="a" style="left:402px;top:569px;width:289px;height:80px;border:1px solid #dcdcdc;border-radius:2px"></div><div class="t" style="left:407px;top:562.58px;font-size:11.3px;line-height:14px;color:#000;background:#f0f0f0;padding:0 1px">Plot area</div>
<div class="a" style="left:402px;top:663px;width:289px;height:90px;border:1px solid #dcdcdc;border-radius:2px"></div><div class="t" style="left:407px;top:656.58px;font-size:11.3px;line-height:14px;color:#000;background:#f0f0f0;padding:0 1px">Plot offset (origin set to printable area)</div>
<div class="a" style="left:699px;top:663px;width:252px;height:90px;border:1px solid #dcdcdc;border-radius:2px"></div><div class="t" style="left:704px;top:656.58px;font-size:11.3px;line-height:14px;color:#000;background:#f0f0f0;padding:0 1px">Plot scale</div>
<div class="a" style="left:961px;top:235px;width:234px;height:64px;border:1px solid #dcdcdc;border-radius:2px"></div><div class="t" style="left:966px;top:228.58px;font-size:11.3px;line-height:14px;color:#000;background:#f0f0f0;padding:0 1px">Plot style table (pen assignments)</div>
<div class="a" style="left:961px;top:313px;width:234px;height:115px;border:1px solid #dcdcdc;border-radius:2px"></div><div class="t" style="left:966px;top:306.58px;font-size:11.3px;line-height:14px;color:#000;background:#f0f0f0;padding:0 1px">Shaded viewport options</div>
<div class="a" style="left:961px;top:441px;width:234px;height:221px;border:1px solid #dcdcdc;border-radius:2px"></div><div class="t" style="left:966px;top:434.58px;font-size:11.3px;line-height:14px;color:#000;background:#f0f0f0;padding:0 1px">Plot options</div>
<div class="a" style="left:961px;top:676px;width:234px;height:77px;border:1px solid #dcdcdc;border-radius:2px"></div><div class="t" style="left:966px;top:669.58px;font-size:11.3px;line-height:14px;color:#000;background:#f0f0f0;padding:0 1px">Drawing orientation</div>
<div class="t" style="left:417px;top:262.08px;font-size:11.3px;line-height:14px;color:#000;">N<u>a</u>me:</div>
<div class="a" style="left:491px;top:258px;width:326px;height:20px;background:#fff;border:1px solid #dadada;border-bottom-color:#9a9a9a;border-radius:3px"></div>
<div class="a" style="left:824px;top:258px;width:108px;height:22px;background:#fbfbfb;border:1px solid #d5d5d5;border-radius:4px"></div>
<div class="t" style="left:417px;top:332.08px;font-size:11.3px;line-height:14px;color:#000;">Na<u>m</u>e:</div>
<div class="t" style="left:417px;top:363.08px;font-size:11.3px;line-height:14px;color:#000;">Plotter:</div>
<div class="t" style="left:417px;top:390.78px;font-size:11.3px;line-height:14px;color:#000;">Location:</div>
<div class="t" style="left:417px;top:417.38px;font-size:11.3px;line-height:14px;color:#000;">Description:</div>
<div class="a" style="left:417px;top:452px;width:11px;height:11px;background:#f6f6f6;border:1px solid #c8c8c8;border-radius:2px"></div>
<div class="t" style="left:432px;top:451.08px;font-size:11.3px;line-height:14px;color:#8a8a8a;">Plot to <u>F</u>ile</div>
<div class="a" style="left:417px;top:516px;width:200px;height:20px;background:#fff;border:1px solid #dedede;border-radius:3px"></div>
<div class="t" style="left:419px;top:519.08px;font-size:11.3px;line-height:14px;color:#000;">ISO A4 (210.00 x 297.00 MM)</div>
<div class="t" style="left:417px;top:586.58px;font-size:11.3px;line-height:14px;color:#000;"><u>W</u>hat to plot:</div>
<div class="a" style="left:417px;top:608px;width:150px;height:20px;background:#fff;border:1px solid #dedede;border-radius:3px"></div>
<div class="t" style="left:419px;top:610.78px;font-size:11.3px;line-height:14px;color:#000;">Display</div>
<div class="t" style="left:421px;top:687.08px;font-size:11.3px;line-height:14px;color:#000;"><u>X</u>:</div>
<div class="a" style="left:441px;top:680px;width:77px;height:24px;background:linear-gradient(#fcfcfc,#f0f0f0);border:1px solid #e0e0e0;border-bottom:1.5px solid #8a8a8a;border-radius:3px"></div>
<div class="t" style="left:443px;top:681.28px;font-size:11.3px;line-height:14px;color:#000;">11.55</div>
<div class="t" style="left:421px;top:724.08px;font-size:11.3px;line-height:14px;color:#000;"><u>Y</u>:</div>
<div class="a" style="left:441px;top:717px;width:77px;height:24px;background:linear-gradient(#fcfcfc,#f0f0f0);border:1px solid #e0e0e0;border-bottom:1.5px solid #8a8a8a;border-radius:3px"></div>
<div class="t" style="left:443px;top:717.78px;font-size:11.3px;line-height:14px;color:#000;">-13.65</div>
<div class="t" style="left:527.5px;top:719.78px;font-size:11.3px;line-height:14px;color:#000;">Millimeters</div>
<div class="a" style="left:760px;top:726px;width:11px;height:11px;background:#f6f6f6;border:1px solid #c8c8c8;border-radius:2px"></div>
<div class="t" style="left:776px;top:725.58px;font-size:11.3px;line-height:14px;color:#8a8a8a;">Scale <u>l</u>ineweights</div>
<div class="a" style="left:979px;top:259px;width:173px;height:18px;background:#fbfbfb;border:1px solid #dcdcdc;border-radius:3px"></div>
<svg class="a" style="left:1139px;top:265px" width="9" height="6"><path d="M0.5 0.5L4.5 4.5L8.5 0.5" stroke="#555" fill="none"/></svg>
<div class="a" style="left:1155px;top:260px;width:24px;height:26px;background:#f7f7f7;border:1px solid #e6e6e6;border-radius:3px"></div>
<svg class="a" style="left:1158px;top:266px" width="18" height="15"><rect x="1.5" y="5" width="14" height="6" rx="1" fill="#9cc0e0" stroke="#5a7fa8"/><rect x="4" y="1" width="9" height="4" fill="#fff" stroke="#6a8fb8" stroke-width="0.8"/><rect x="4" y="10" width="9" height="4" fill="#eef4fa" stroke="#6a8fb8" stroke-width="0.8"/><path d="M12 13l4-5" stroke="#e0902a" stroke-width="1.5"/></svg>
<div class="a" style="left:1100px;top:328px;width:83px;height:18px;background:#fff;border:1px solid #dcdcdc"></div>
<div class="a" style="left:1101px;top:329px;width:63px;height:16px;background:#dddddd"></div>
<div class="t" style="left:1120px;top:330.58px;font-size:11.3px;line-height:14px;color:#222;">d</div>
<svg class="a" style="left:1169px;top:334px" width="9" height="6"><path d="M0.5 0.5L4.5 4.5L8.5 0.5" stroke="#555" fill="none"/></svg>
<div class="a" style="left:1100px;top:362px;width:83px;height:18px;background:linear-gradient(90deg,#f3f3f3,#fff);border:1px solid #dcdcdc"></div>
<svg class="a" style="left:1169px;top:368px" width="9" height="6"><path d="M0.5 0.5L4.5 4.5L8.5 0.5" stroke="#555" fill="none"/></svg>
<div class="a" style="left:1100px;top:393px;width:83px;height:24px;background:#efefef;border:1px solid #e4e4e4"></div>
<svg class="a" style="left:978px;top:709px" width="14" height="14"><circle cx="6.5" cy="6.5" r="5.8" fill="#fafafa" stroke="#444" stroke-width="1"/></svg>
<div class="t" style="left:994.5px;top:709.08px;font-size:11.3px;line-height:14px;color:#000;">Landscape</div>
<div class="a" style="left:979px;top:731px;width:12px;height:12px;background:#fafafa;border:1px solid #444;border-radius:2px"></div>
<div class="t" style="left:994.5px;top:731.08px;font-size:11.3px;line-height:14px;color:#000;">Plot upside-<u>d</u>own</div>
<svg class="a" style="left:1152px;top:691px" width="30" height="36"><path d="M1.5 1.5H21L28.5 9V34.5H1.5Z" fill="#dbe8f6" stroke="#1c3f8a" stroke-width="1.3"/><path d="M21 1.5V9H28.5" fill="#fff" stroke="#1c3f8a" stroke-width="1"/><path d="M7 10h15v5h-1.5l-1-2.5h-3V28h2.5v1.5H9.5V28H12V12.5H9l-1 2.5H7z" fill="#1c3f8a"/></svg>
<div class="a" style="left:403px;top:768px;width:88px;height:23px;background:#f7f7f7;border:1px solid #ececec;border-radius:4px"></div>
<div class="t" style="left:422px;top:773.58px;font-size:11.3px;line-height:14px;color:#8a8a8a;"><u>P</u>review...</div>
<div class="a" style="left:772px;top:768px;width:120px;height:23px;background:#f5f5f5;border:1px solid #ececec;border-radius:4px"></div>
<div class="t" style="left:793px;top:773.58px;font-size:11.3px;line-height:14px;color:#8a8a8a;">Apply to Layo<u>u</u>t</div>
<div class="a" style="left:899px;top:768px;width:83px;height:23px;background:#fdfdfd;border:1px solid #dedede;border-radius:4px"></div>
<div class="t" style="left:932px;top:773.58px;font-size:11.3px;line-height:14px;color:#000;">OK</div>
<div class="a" style="left:990px;top:768px;width:83px;height:23px;background:#fdfdfd;border:1px solid #dedede;border-radius:4px"></div>
<div class="t" style="left:1012px;top:773.58px;font-size:11.3px;line-height:14px;color:#000;">Cancel</div>
<div class="a" style="left:1081px;top:768px;width:83px;height:23px;background:#fdfdfd;border:1px solid #dedede;border-radius:4px"></div>
<div class="t" style="left:1110px;top:773.58px;font-size:11.3px;line-height:14px;color:#000;"><u>H</u>elp</div>
<div class="a" style="left:1173px;top:768px;width:24px;height:23px;background:#fdfdfd;border:1px solid #dedede;border-radius:4px"></div>
<svg class="a" style="left:1178px;top:774px" width="14" height="11"><path d="M6 1L1.5 5.5L6 10M11 1L6.5 5.5L11 10" stroke="#1c2f6a" stroke-width="1.8" fill="none"/></svg>
<!--/DLG-->
<!--DLG2-->
<div class="a" style="left:477px;top:263px;width:644px;height:447px;border-radius:8px;background:linear-gradient(#d2f700,#8ee800 50%,#40e200);box-shadow:0 10px 30px rgba(0,0,0,0.35),0 2px 6px rgba(0,0,0,0.2)"></div>
<div class="a" style="left:482px;top:268px;width:634px;height:436px;background:#f0f0f0;border-radius:4px"></div>
<div class="a" style="left:482px;top:268px;width:634px;height:29px;background:#f3f3f3;border-radius:4px 4px 0 0"></div>
<div class="t" style="left:490.5px;top:273.30px;font-size:13px;line-height:16px;color:#1a1a1a;">Add Plotter - Plotter Model</div>
<svg class="a" style="left:1095px;top:275px" width="12" height="12"><path d="M1 1l10 10M11 1L1 11" stroke="#222" stroke-width="1.2"/></svg>
<div class="t" style="left:511px;top:318.78px;font-size:11.3px;line-height:14px;color:#111;">Start</div>
<div class="t" style="left:511px;top:340.68px;font-size:11.3px;line-height:14px;color:#a3a3a3;">Network Plotter</div>
<div class="t" style="left:511px;top:362.58px;font-size:11.3px;line-height:14px;color:#a3a3a3;">System Printer</div>
<div class="t" style="left:511px;top:384.48px;font-size:11.3px;line-height:14px;color:#111;">Plotter Model</div>
<div class="t" style="left:511px;top:406.38px;font-size:11.3px;line-height:14px;color:#a3a3a3;">Select Driver</div>
<div class="t" style="left:511px;top:428.28px;font-size:11.3px;line-height:14px;color:#111;">Import Pcp or Pc2</div>
<div class="t" style="left:511px;top:450.18px;font-size:11.3px;line-height:14px;color:#111;">Ports</div>
<div class="t" style="left:511px;top:472.08px;font-size:11.3px;line-height:14px;color:#111;">Plotter Name</div>
<div class="t" style="left:511px;top:493.98px;font-size:11.3px;line-height:14px;color:#111;">Finish</div>
<svg class="a" style="left:493px;top:390px" width="10" height="12"><path d="M1 1L9 6L1 11Z" fill="#1a237e"/></svg>
<svg class="a" style="left:627px;top:309px" width="35" height="35">
<path d="M8 2h13l3 3v7H8z" fill="#f4f8fc" stroke="#3a6fa8" stroke-width="1.3"/>
<path d="M2 12h28v16H2z" fill="#b9d3ec" stroke="#3a6fa8" stroke-width="1.3"/>
<path d="M3 20h26v4H3z" fill="#4a82c0"/>
<path d="M8 24h12v7H8z" fill="#e8f0f8" stroke="#3a6fa8" stroke-width="1.1"/>
<path d="M21 17h7l4 4v12H21z" fill="#f4f8fc" stroke="#3a6fa8" stroke-width="1.3"/>
</svg>
<div class="t" style="left:670.7px;top:309.68px;font-size:11.3px;line-height:14px;color:#111;">Select your plotter manufacturer and model. If your plotter isn't listed, consult your</div>
<div class="t" style="left:670.7px;top:324.08px;font-size:11.3px;line-height:14px;color:#111;">plotter documentation for a compatible plotter.</div>
<div class="t" style="left:670.7px;top:360.88px;font-size:11.3px;line-height:14px;color:#111;">Optionally, if you have an installation disk containing an HDI driver, choose Have</div>
<div class="t" style="left:670.7px;top:375.28px;font-size:11.3px;line-height:14px;color:#111;">Disk. A Browse for HIF File dialog box is displayed for you to locate and install the</div>
<div class="t" style="left:670.7px;top:389.68px;font-size:11.3px;line-height:14px;color:#111;">HIF file attached to the HDI driver.</div>
<div class="t" style="left:637px;top:432.08px;font-size:11.3px;line-height:14px;color:#111;"><u>M</u>anufacturers</div>
<div class="t" style="left:834.5px;top:432.08px;font-size:11.3px;line-height:14px;color:#111;">M<u>o</u>dels</div>
<div class="a" style="left:636px;top:450px;width:189px;height:101px;background:#fff;border:1px solid #a8a8a8"></div><div class="a" style="left:806px;top:451px;width:18px;height:99px;background:#f0f0f0"></div><div class="a" style="left:810px;top:478px;width:9px;height:53px;background:#858585"></div><div class="a" style="left:638px;top:524.0px;width:167px;height:14.5px;background:#0078d7"></div><div class="t" style="left:639px;top:451.38px;font-size:11.3px;line-height:14px;color:#111;">Autodesk</div><div class="t" style="left:639px;top:465.98px;font-size:11.3px;line-height:14px;color:#111;">Canon</div><div class="t" style="left:639px;top:480.58px;font-size:11.3px;line-height:14px;color:#111;">HP</div><div class="t" style="left:639px;top:495.18px;font-size:11.3px;line-height:14px;color:#111;">HP(Initialized)</div><div class="t" style="left:639px;top:509.78px;font-size:11.3px;line-height:14px;color:#111;">OCE</div><div class="t" style="left:639px;top:524.38px;font-size:11.3px;line-height:14px;color:#fff;">Raster File Formats</div>
<div class="a" style="left:834px;top:450px;width:264px;height:101px;background:#fff;border:1px solid #a8a8a8"></div><div class="a" style="left:1079px;top:451px;width:18px;height:99px;background:#f0f0f0"></div><div class="a" style="left:1083px;top:485px;width:9px;height:46px;background:#858585"></div><div class="a" style="left:836px;top:509.4px;width:243px;height:14.5px;background:#0078d7"></div><div class="t" style="left:837px;top:451.38px;font-size:11.3px;line-height:14px;color:#111;">GIF</div><div class="t" style="left:837px;top:465.98px;font-size:11.3px;line-height:14px;color:#111;">JPEG 1.0</div><div class="t" style="left:837px;top:480.58px;font-size:11.3px;line-height:14px;color:#111;">PNG</div><div class="t" style="left:837px;top:495.18px;font-size:11.3px;line-height:14px;color:#111;">TIF</div><div class="t" style="left:837px;top:509.78px;font-size:11.3px;line-height:14px;color:#fff;">TIFF Version 6 (CCITT G4 2D compression)</div><div class="t" style="left:837px;top:524.38px;font-size:11.3px;line-height:14px;color:#111;">WMF 1.0</div>
<div class="t" style="left:637px;top:556.58px;font-size:11.3px;line-height:14px;color:#111;">Supported format of this type :Gcad Raster TIFF(CCITT</div>
<div class="t" style="left:637px;top:571.08px;font-size:11.3px;line-height:14px;color:#111;">G4).1.0 - Provided by gcad</div>
<div class="a" style="left:966px;top:556px;width:128px;height:28px;background:#fdfdfd;border:1px solid #d9d9d9;border-radius:4px"></div>
<div class="t" style="left:998px;top:564.08px;font-size:11.3px;line-height:14px;color:#111;"><u>H</u>ave Disk ...</div>
<div class="a" style="left:494px;top:651px;width:612px;height:1px;background:#a8a8a8"></div>
<div class="a" style="left:843px;top:668px;width:83px;height:24px;background:#fdfdfd;border:1px solid #d9d9d9;border-radius:4px"></div>
<div class="t" style="left:867px;top:673.58px;font-size:11.3px;line-height:14px;color:#111;">&lt; <u>B</u>ack</div>
<div class="a" style="left:928px;top:668px;width:83px;height:24px;background:#fdfdfd;border:1px solid #3f86d8;border-radius:4px"></div>
<div class="t" style="left:952px;top:673.58px;font-size:11.3px;line-height:14px;color:#111;"><u>N</u>ext &gt;</div>
<div class="a" style="left:1023px;top:668px;width:83px;height:24px;background:#fdfdfd;border:1px solid #d9d9d9;border-radius:4px"></div>
<div class="t" style="left:1046px;top:673.58px;font-size:11.3px;line-height:14px;color:#111;">Cancel</div>
<!--/DLG2-->
</body></html>
